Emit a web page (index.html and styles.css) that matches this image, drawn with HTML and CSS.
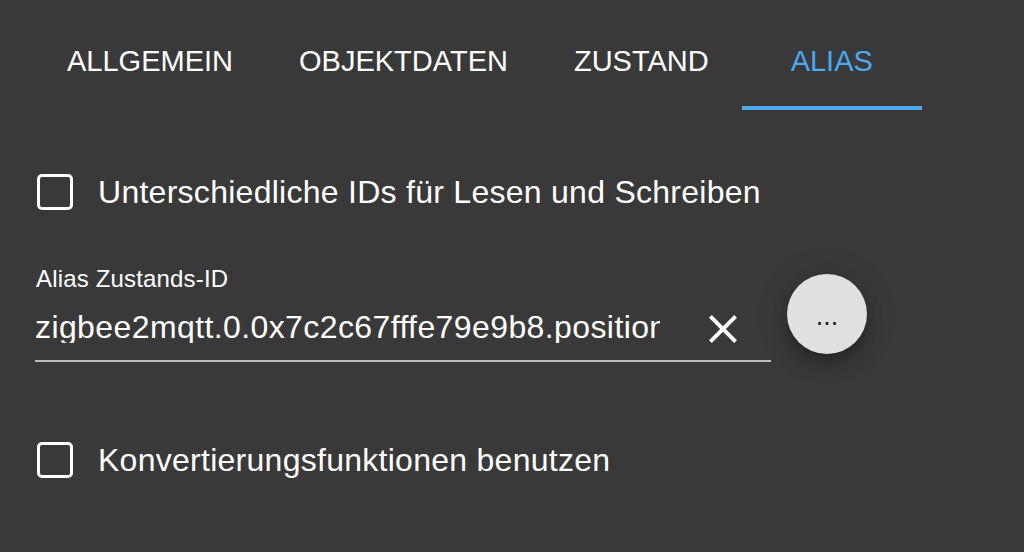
FILE: index.html
```html
<!DOCTYPE html>
<html lang="de">
<head>
<meta charset="utf-8">
<title>Alias</title>
<link rel="stylesheet" href="styles.css">
</head>
<body>
<div class="page">
  <nav class="tabs">
    <div class="tab">ALLGEMEIN</div>
    <div class="tab">OBJEKTDATEN</div>
    <div class="tab">ZUSTAND</div>
    <div class="tab tab-active">ALIAS</div>
  </nav>

  <div class="content">
    <label class="check-row check-first">
      <span class="check-box"></span>
      <span class="check-label">Unterschiedliche IDs für Lesen und Schreiben</span>
    </label>

    <div class="field-row">
      <div class="field">
        <div class="field-label">Alias Zustands-ID</div>
        <div class="field-input">
          <span class="field-value">zigbee2mqtt.0.0x7c2c67fffe79e9b8.position</span>
          <svg class="clear-icon" viewBox="0 0 24 24" width="48" height="48" aria-hidden="true">
            <path d="M19 6.41 17.59 5 12 10.59 6.41 5 5 6.41 10.59 12 5 17.59 6.41 19 12 13.41 17.59 19 19 17.59 13.41 12z" fill="#ffffff"/>
          </svg>
        </div>
      </div>
      <button class="fab" type="button">...</button>
    </div>

    <label class="check-row check-second">
      <span class="check-box"></span>
      <span class="check-label">Konvertierungsfunktionen benutzen</span>
    </label>
  </div>
</div>
</body>
</html>
```
FILE: styles.css
```css
html, body {
  margin: 0;
  padding: 0;
  background: #393939;
}

body {
  font-family: "Liberation Sans", Arial, Helvetica, sans-serif;
  color: #ffffff;
  width: 1024px;
  height: 552px;
  overflow: hidden;
}

.tabs {
  display: flex;
  padding-left: 34px;
  height: 110px;
}

.tab {
  box-sizing: border-box;
  height: 110px;
  padding: 47px 33px 0;
  min-width: 180px;
  text-align: center;
  font-size: 29px;
  line-height: 29px;
  color: #ffffff;
}

.tab-active {
  color: #4ba9ee;
  border-bottom: 4px solid #4ba9ee;
}

.content {
  display: flex;
  flex-direction: column;
  align-items: flex-start;
}

.check-row {
  display: flex;
  align-items: center;
  height: 44px;
  padding-left: 37px;
  gap: 25px;
}

.check-first {
  margin-top: 60px;
}

.check-second {
  margin-top: 76px;
}

.check-box {
  box-sizing: border-box;
  width: 36px;
  height: 36px;
  border: 3.5px solid #ffffff;
  border-radius: 5px;
}

.check-label {
  font-size: 32px;
  line-height: 44px;
  letter-spacing: 0.27px;
  color: #ffffff;
}

.field-row {
  display: flex;
  align-items: flex-start;
  margin-top: 53px;
  padding-left: 35px;
}

.field {
  width: 736px;
}

.field-label {
  font-size: 24px;
  line-height: 24px;
  letter-spacing: 0.17px;
  padding-left: 1px;
  color: #ffffff;
}

.field-input {
  display: flex;
  align-items: center;
  height: 63px;
  margin-top: 6px;
  border-bottom: 2px solid #bdbdbd;
  padding-right: 24px;
}

.field-value {
  width: 625px;
  flex: none;
  overflow: hidden;
  white-space: nowrap;
  text-overflow: clip;
  font-size: 32px;
  line-height: 32px;
  letter-spacing: 0.4px;
  margin-bottom: 4px;
  color: #ffffff;
}

.clear-icon {
  margin-left: 39px;
  flex: none;
  display: block;
}

.fab {
  margin-left: 16px;
  margin-top: 7px;
  width: 80px;
  height: 80px;
  border: none;
  border-radius: 50%;
  background: #e0e0e0;
  color: rgba(0, 0, 0, 0.87);
  font-family: "Liberation Sans", Arial, sans-serif;
  font-size: 27px;
  line-height: 27px;
  padding: 4px 0 0;
  box-shadow: 0 6px 10px -2px rgba(0, 0, 0, 0.2), 0 12px 20px 0 rgba(0, 0, 0, 0.14), 0 2px 36px 0 rgba(0, 0, 0, 0.12);
}
```
